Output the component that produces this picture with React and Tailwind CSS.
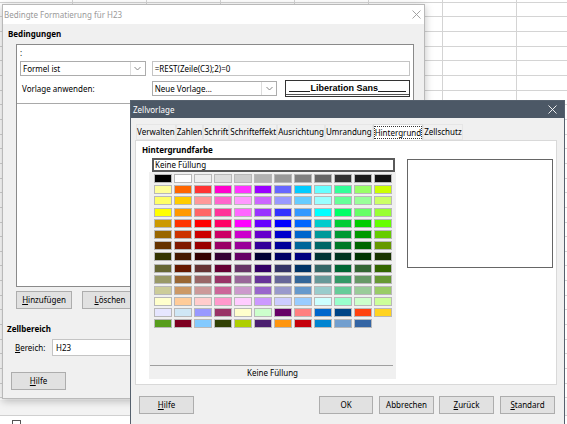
import React from 'react'

const palette = [
  ['#000000', '#ffffff', '#eeeeee', '#dddddd', '#cccccc', '#b2b2b2', '#999999', '#808080', '#666666', '#333333', '#1c1c1c', '#111111'],
  ['#ffff99', '#ff6600', '#ff3333', '#ff00cc', '#ff33ff', '#9900ff', '#6666ff', '#00ccff', '#66ffff', '#33ff99', '#99ff66', '#ccff00'],
  ['#ffff66', '#ffcc00', '#ff9999', '#ff66cc', '#ff99ff', '#cc66ff', '#9999ff', '#66ccff', '#99ffff', '#66ff99', '#99ff99', '#ccff66'],
  ['#ffff00', '#ff9900', '#ff6666', '#ff3399', '#ff66ff', '#9933ff', '#3333ff', '#3399ff', '#00ffff', '#00ff66', '#66ff66', '#99ff33'],
  ['#cc9900', '#ff3300', '#ff0000', '#ff0066', '#ff00ff', '#6600ff', '#0000ff', '#0066ff', '#00cccc', '#00cc33', '#00cc00', '#66ff00'],
  ['#996600', '#cc3300', '#cc0000', '#cc0066', '#cc00cc', '#6600cc', '#0000cc', '#0066cc', '#009999', '#009933', '#009900', '#66cc00'],
  ['#663300', '#801900', '#990000', '#990066', '#990099', '#330099', '#000099', '#006699', '#006666', '#007826', '#006600', '#669900'],
  ['#333300', '#461900', '#330000', '#330033', '#660066', '#000033', '#000066', '#000080', '#003333', '#00331f', '#003300', '#193300'],
  ['#666633', '#661900', '#663333', '#660033', '#663366', '#330066', '#333366', '#003366', '#336666', '#006633', '#336633', '#336600'],
  ['#999966', '#996633', '#996666', '#993366', '#996699', '#663399', '#666699', '#336699', '#669999', '#339966', '#669966', '#669933'],
  ['#cccc99', '#cc9966', '#cc9999', '#cc6699', '#cc99cc', '#9966cc', '#9999cc', '#6699cc', '#99cccc', '#66cc99', '#99cc99', '#99cc66'],
  ['#ffffcc', '#ffcc99', '#ffcccc', '#ff99cc', '#ffccff', '#cc99ff', '#ccccff', '#99ccff', '#ccffff', '#99ffcc', '#ccffcc', '#ccff99'],
  ['#e6e6ff', '#cfe7f5', '#9999ff', '#993366', '#ffffcc', '#ccffcc', '#660066', '#ff8080', '#0066cc', '#004586', '#ff420e', '#ffd320'],
  ['#579d1c', '#7e0021', '#83caff', '#314004', '#aecf00', '#4b1f6f', '#ff950e', '#c5000b', '#0084d1', '#729fcf', '#3465a4'],
]

const tabs = ['Verwalten', 'Zahlen', 'Schrift', 'Schrifteffekt', 'Ausrichtung', 'Umrandung', 'Hintergrund', 'Zellschutz']

function CloseIcon({ color }) {
  return (
    <svg width="9" height="9" viewBox="0 0 9 9">
      <path d="M0.5 0.5 L8.5 8.5 M8.5 0.5 L0.5 8.5" stroke={color} strokeWidth="0.9" fill="none" />
    </svg>
  )
}

function Chevron() {
  return (
    <svg width="7" height="5" viewBox="0 0 7 5">
      <path d="M0.5 1 L3.5 4 L6.5 1" stroke="#7a7a7a" strokeWidth="0.9" fill="none" />
    </svg>
  )
}

function Dropdown({ label, className }) {
  return (
    <div className={`flex h-[15px] border border-[#acacac] bg-white ${className}`}>
      <div className="flex-1 pl-[2px] leading-[13px]">{label}</div>
      <div className="flex w-[15px] items-center justify-center border-l border-[#dcdcdc]">
        <Chevron />
      </div>
    </div>
  )
}

function Button({ children, className = '' }) {
  return (
    <div className={`flex h-[18px] items-center justify-center border border-[#adadad] bg-[#e1e1e1] ${className}`}>
      {children}
    </div>
  )
}

function Sheet() {
  const rows = Array.from({ length: 28 })
  const cols = Array.from({ length: 9 })
  return (
    <div className="flex flex-col">
      <div className="h-[400px] overflow-hidden">
        <div className="-mt-[12px] -ml-[1px]">
          {rows.map((_, r) => (
            <div key={r} className="flex">
              {cols.map((_, c) => (
                <div key={c} className="h-[14.67px] w-[74px] shrink-0 border-r border-b border-[#d4d4d4]" />
              ))}
            </div>
          ))}
        </div>
      </div>
      <div className="h-[16px] border-b border-[#d0d0d0] bg-[#f3f3f3]" />
      <div className="pl-[12px] pt-[4px]">
        <div className="h-[9px] w-[9px] border border-[#555]" />
      </div>
    </div>
  )
}

function ConditionDialog() {
  return (
    <div className="absolute left-[2px] top-[4px] flex h-[395px] w-[423px] flex-col border border-[#b9b9b9] bg-[#f0f0f0] shadow-[0_2px_8px_rgba(0,0,0,0.25)]">
      <div className="flex h-[19px] items-center justify-between bg-white pl-[1px] pr-[3px] text-[#9a9a9a]">
        <span>Bedingte Formatierung für H23</span>
        <CloseIcon color="#9a9a9a" />
      </div>
      <div className="h-[12px] mt-[4px] pl-[5px] font-bold leading-[12px]">Bedingungen</div>
      <div className="ml-[13px] mt-[4px] h-[243px] w-[398px] border border-[#8a8a8a] bg-white">
        <div className="border-b border-[#a9a9a9] px-[3px] pt-[1px] pb-[6px]">
          <div className="h-[14px] leading-[14px]">:</div>
          <div className="mt-[1px] flex">
            <Dropdown label="Formel ist" className="w-[126px]" />
            <div className="ml-[6px] h-[15px] w-[259px] border border-[#c4c4c4] pl-[2px] leading-[13px]">
              =REST(Zeile(C3);2)=0
            </div>
          </div>
          <div className="mt-[4px] flex h-[17px] items-center">
            <div className="w-[132px] pl-[2px]">Vorlage anwenden:</div>
            <Dropdown label="Neue Vorlage..." className="w-[126px]" />
            <div className="ml-[8px] flex h-[17px] w-[125px] flex-col border border-[#333] bg-white">
              <div className="flex flex-1 items-end px-[3px]">
                <div className="mb-[2px] flex-1 border-b border-[#222]" />
                <span className="font-['Liberation_Sans',Arial,sans-serif] text-[9px] font-bold leading-[11px]">Liberation Sans</span>
                <div className="mb-[2px] w-[28px] border-b border-[#222]" />
              </div>
              <div className="h-[2px] border-t border-[#555]" />
            </div>
          </div>
        </div>
      </div>
      <div className="ml-[13px] mt-[4px] flex">
        <Button className="w-[56px]"><span><u>H</u>inzufügen</span></Button>
        <Button className="ml-[10px] w-[56px]"><span><u>L</u>öschen</span></Button>
      </div>
      <div className="mt-[14px] h-[12px] pl-[4px] font-bold leading-[12px]">Zellbereich</div>
      <div className="mt-[4px] flex h-[17px] items-center pl-[12px]">
        <div className="w-[37px]"><u>B</u>ereich:</div>
        <div className="h-[17px] w-[110px] border border-[#c4c4c4] bg-white pl-[3px] leading-[15px]">H23</div>
      </div>
      <div className="ml-[8px] mt-[16px]">
        <Button className="w-[55px]"><span><u>H</u>ilfe</span></Button>
      </div>
    </div>
  )
}

function CellStyleDialog() {
  return (
    <div className="absolute left-[130px] top-[100px] flex h-[330px] w-[435px] flex-col border border-[#56616e] bg-[#f0f0f0]">
      <div className="flex h-[17px] items-center justify-between bg-[#4c5866] pl-[2px] pr-[7px] text-white">
        <span>Zellvorlage</span>
        <CloseIcon color="#ffffff" />
      </div>
      <div className="mt-[6px] flex pl-[5px]">
        {tabs.map(t =>
          t === 'Hintergrund' ? (
            <div key={t} className="flex h-[16px] items-center border border-b-0 border-[#d9d9d9] bg-white">
              <span className="border border-dotted border-[#333] leading-[11px]">{t}</span>
            </div>
          ) : (
            <div key={t} className="flex h-[16px] items-center border border-[#e6e6e6] bg-[#f0f0f0]">
              {t}
            </div>
          )
        )}
      </div>
      <div className="ml-[4px] h-[245px] w-[422px] border border-[#d9d9d9] bg-white">
        <div className="mt-[3px] h-[12px] pl-[6px] font-bold leading-[12px]">Hintergrundfarbe</div>
        <div className="mt-[2px] flex items-start pl-[13px]">
          <div className="flex w-[247px] flex-col">
            <div className="ml-[3px] h-[14px] w-[243px] border-2 border-[#5a5a5a] pl-[1px] leading-[10px]">Keine Füllung</div>
            <div className="flex h-[207px] flex-col bg-[#f0f0f0] pl-[5px] pt-[2px]">
              <div className="grid grid-cols-[repeat(12,18px)] gap-x-[2px] gap-y-[2.2px]">
                {palette.flat().map((c, i) => (
                  <div key={i} className="h-[9px] border border-[#b8b8b8]" style={{ backgroundColor: c }} />
                ))}
              </div>
              <div className="flex-1" />
              <div className="-ml-[4px] mr-[3px] border-t border-[#a0a0a0]" />
              <div className="-ml-[5px] h-[13px] text-center leading-[13px]">Keine Füllung</div>
            </div>
          </div>
          <div className="ml-[11px] mt-[1px] h-[109px] w-[146px] border border-[#666] bg-white" />
        </div>
      </div>
      <div className="mt-[11px] flex pl-[8px] pr-[9px]">
        <Button className="w-[55px]"><span><u>H</u>ilfe</span></Button>
        <div className="flex-1" />
        <Button className="w-[54px] border-[#0078d7]">OK</Button>
        <Button className="ml-[6px] w-[55px]">Abbrechen</Button>
        <Button className="ml-[5px] w-[55px]"><span><u>Z</u>urück</span></Button>
        <Button className="ml-[6px] w-[55px]"><span><u>S</u>tandard</span></Button>
      </div>
    </div>
  )
}

export default function App() {
  return (
    <div className="relative h-[424px] w-[567px] overflow-hidden bg-white font-['Noto_Sans',sans-serif] text-[8px] text-black">
      <Sheet />
      <ConditionDialog />
      <CellStyleDialog />
    </div>
  )
}
